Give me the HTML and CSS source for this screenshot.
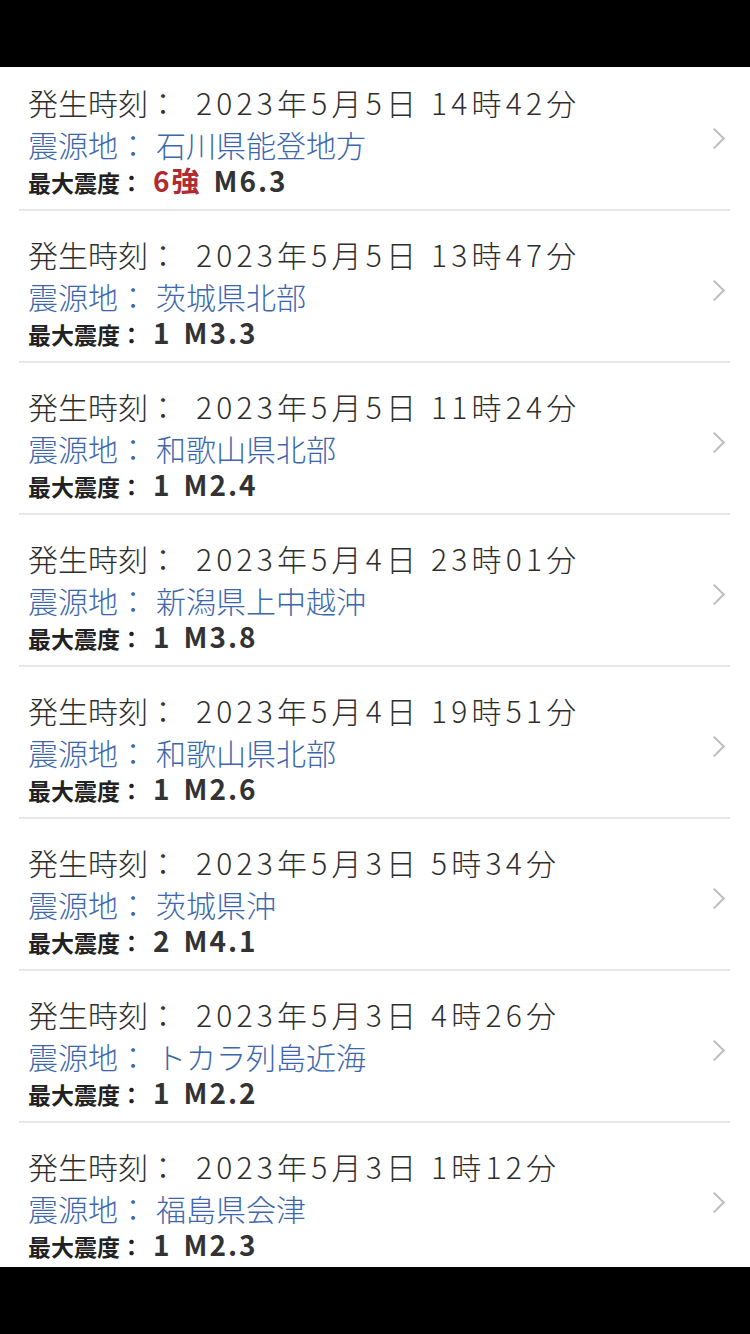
FILE: index.html
```html
<!DOCTYPE html>
<html lang="ja">
<head>
    <meta charset="UTF-8">
    <meta name="viewport" content="width=device-width, initial-scale=1.0">
    <title>地震情報</title>
    <link rel="stylesheet" href="styles.css">
</head>
<body>
<div class="screen">
    <div class="status-bar"></div>
    <div class="list">
        <div class="item">
            <div class="info">
                <div class="time">発生時刻：<span class="value">2023年5月5日 14時42分</span></div>
                <div class="place">震源地：<span class="value">石川県能登地方</span></div>
                <div class="scale">最大震度：<span class="value"><span class="int strong">6強</span><span class="mag">M6.3</span></span></div>
            </div>
            <span class="chevron"></span>
        </div>
        <div class="item">
            <div class="info">
                <div class="time">発生時刻：<span class="value">2023年5月5日 13時47分</span></div>
                <div class="place">震源地：<span class="value">茨城県北部</span></div>
                <div class="scale">最大震度：<span class="value"><span class="int">1</span><span class="mag">M3.3</span></span></div>
            </div>
            <span class="chevron"></span>
        </div>
        <div class="item">
            <div class="info">
                <div class="time">発生時刻：<span class="value">2023年5月5日 11時24分</span></div>
                <div class="place">震源地：<span class="value">和歌山県北部</span></div>
                <div class="scale">最大震度：<span class="value"><span class="int">1</span><span class="mag">M2.4</span></span></div>
            </div>
            <span class="chevron"></span>
        </div>
        <div class="item">
            <div class="info">
                <div class="time">発生時刻：<span class="value">2023年5月4日 23時01分</span></div>
                <div class="place">震源地：<span class="value">新潟県上中越沖</span></div>
                <div class="scale">最大震度：<span class="value"><span class="int">1</span><span class="mag">M3.8</span></span></div>
            </div>
            <span class="chevron"></span>
        </div>
        <div class="item">
            <div class="info">
                <div class="time">発生時刻：<span class="value">2023年5月4日 19時51分</span></div>
                <div class="place">震源地：<span class="value">和歌山県北部</span></div>
                <div class="scale">最大震度：<span class="value"><span class="int">1</span><span class="mag">M2.6</span></span></div>
            </div>
            <span class="chevron"></span>
        </div>
        <div class="item">
            <div class="info">
                <div class="time">発生時刻：<span class="value">2023年5月3日 5時34分</span></div>
                <div class="place">震源地：<span class="value">茨城県沖</span></div>
                <div class="scale">最大震度：<span class="value"><span class="int">2</span><span class="mag">M4.1</span></span></div>
            </div>
            <span class="chevron"></span>
        </div>
        <div class="item">
            <div class="info">
                <div class="time">発生時刻：<span class="value">2023年5月3日 4時26分</span></div>
                <div class="place">震源地：<span class="value">トカラ列島近海</span></div>
                <div class="scale">最大震度：<span class="value"><span class="int">1</span><span class="mag">M2.2</span></span></div>
            </div>
            <span class="chevron"></span>
        </div>
        <div class="item">
            <div class="info">
                <div class="time">発生時刻：<span class="value">2023年5月3日 1時12分</span></div>
                <div class="place">震源地：<span class="value">福島県会津</span></div>
                <div class="scale">最大震度：<span class="value"><span class="int">1</span><span class="mag">M2.3</span></span></div>
            </div>
            <span class="chevron"></span>
        </div>
    </div>
    <div class="home-bar"></div>
</div>
</body>
</html>
```

FILE: styles.css
```css
body {
    margin: 0;
    font-family: "Noto Sans CJK JP", "Noto Sans", sans-serif;
    background-color: #000;
}
.screen {
    width: 750px;
    height: 1334px;
    display: flex;
    flex-direction: column;
    background-color: #fff;
}
.status-bar,
.home-bar {
    height: 67px;
    flex-shrink: 0;
    background-color: #000;
}
.list {
    flex: 1;
    overflow: hidden;
}
.item {
    display: flex;
    align-items: center;
    margin: 0 20px 0 19px;
    padding: 22px 7px 14px 9px;
    border-bottom: 2px solid #e6e6e6;
}
.item:first-child {
    padding-top: 14px;
}
.info {
    flex: 1;
}
.time {
    height: 42px;
    line-height: 42px;
    font-size: 30px;
    font-weight: 300;
    color: #2e2e2e;
}
.time .value {
    margin-left: 18px;
    letter-spacing: 4.2px;
}
.place {
    height: 42px;
    line-height: 42px;
    font-size: 30px;
    font-weight: 300;
    color: #3d67ad;
}
.place .value {
    margin-left: 8px;
}
.scale {
    height: 30px;
    line-height: 30px;
    font-size: 23px;
    font-weight: bold;
    color: #222;
}
.scale .value {
    margin-left: 10px;
    font-size: 28px;
    letter-spacing: 2px;
    color: #333;
}
.strong {
    color: #b12a31;
}
.mag {
    margin-left: 12px;
}
.chevron {
    width: 13px;
    height: 13px;
    margin-right: 1px;
    border-top: 2px solid #bdbdbd;
    border-right: 2px solid #bdbdbd;
    transform: rotate(45deg);
}
```
